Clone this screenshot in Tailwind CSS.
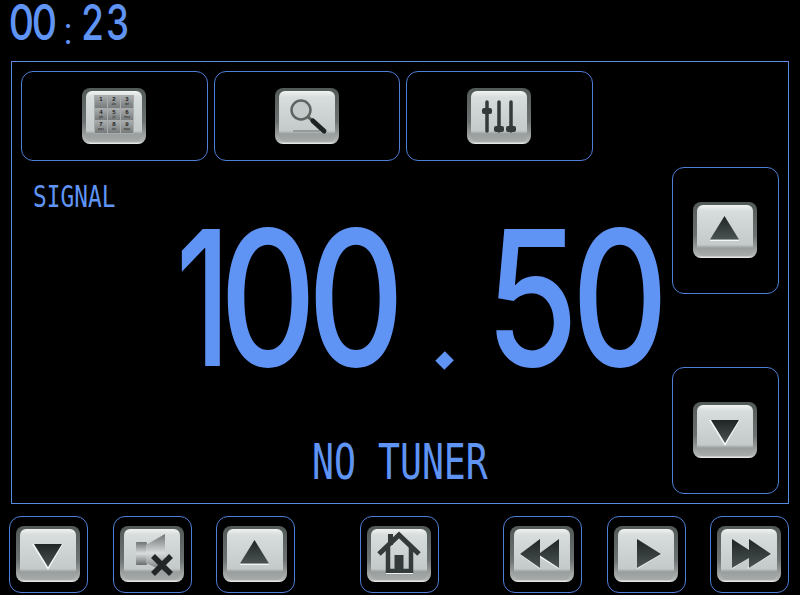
<!DOCTYPE html>
<html lang="en">
<head>
  <meta charset="UTF-8" />
  <title>Radio</title>
  <script src="https://cdn.jsdelivr.net/npm/@tailwindcss/browser@4"></script>
</head>
<body class="bg-black w-[800px] h-[595px] overflow-hidden text-[#5f94f5] [font-family:Inter,sans-serif]">
  <svg class="absolute w-0 h-0">
    <defs>
      <linearGradient id="dark" x1="0" y1="0" x2="0" y2="1"><stop offset="0" stop-color="#1f2525"/><stop offset="1" stop-color="#4b5352"/></linearGradient>
      <linearGradient id="cone" x1="0" y1="0" x2="0" y2="1"><stop offset="0" stop-color="#6f7373"/><stop offset="0.5" stop-color="#d9dcdc"/><stop offset="1" stop-color="#6a6e6e"/></linearGradient>
    </defs>
  </svg>

  <!-- Clock -->
  <div class="flex h-[61px] pl-[10px] text-[49px] leading-[46px] font-medium">
    <span class="flex w-[23px] justify-center scale-x-[0.8]">0</span>
    <span class="flex w-[23px] justify-center scale-x-[0.8]">0</span>
    <span class="flex w-[24px] justify-center font-light text-[38px] translate-y-[7px]">:</span>
    <span class="flex w-[25px] justify-center scale-x-[0.75]">2</span>
    <span class="flex w-[25px] justify-center scale-x-[0.75]">3</span>
  </div>

  <!-- Main panel -->
  <div class="ml-[11px] w-[778px] h-[443px] border border-[#5a8ae0] flex pl-[9px] pt-[9px]">
    <div class="w-[651px]">
      <div class="flex gap-[6px]">
        <div class="w-[187px] h-[90px] pr-[1px] border border-[#4f7fd8] rounded-xl flex items-center justify-center">
          <div class="relative w-16 h-14 rounded-lg bg-[linear-gradient(180deg,#525a58,#6c7271_60%,#b4b8b7_96%,#f4f6f6)] pt-[3px] px-[4px] pb-[2px]">
            <div class="h-full rounded-md bg-[linear-gradient(180deg,#f0f3f2,#d7dddc_12%,#c3cac9_78%,#989e9d_84%,#a8acab)]"></div>
            <div class="absolute left-[12px] top-[7px] w-[40px] h-[39px] grid grid-cols-3 gap-[1px] p-[1px] bg-[#a8acac] text-[#1d2020] [font-family:'Liberation_Sans',sans-serif]">
              <div class="flex flex-col items-center bg-[linear-gradient(180deg,#a9acac,#777b7b)] text-[6px] leading-[7px] font-bold">1</div>
              <div class="flex flex-col items-center bg-[linear-gradient(180deg,#a9acac,#777b7b)] text-[6px] leading-[7px] font-bold">2<span class="text-[3px] leading-[3px] font-normal">abc</span></div>
              <div class="flex flex-col items-center bg-[linear-gradient(180deg,#a9acac,#777b7b)] text-[6px] leading-[7px] font-bold">3<span class="text-[3px] leading-[3px] font-normal">def</span></div>
              <div class="flex flex-col items-center bg-[linear-gradient(180deg,#a9acac,#777b7b)] text-[6px] leading-[7px] font-bold">4<span class="text-[3px] leading-[3px] font-normal">ghi</span></div>
              <div class="flex flex-col items-center bg-[linear-gradient(180deg,#a9acac,#777b7b)] text-[6px] leading-[7px] font-bold">5<span class="text-[3px] leading-[3px] font-normal">jkl</span></div>
              <div class="flex flex-col items-center bg-[linear-gradient(180deg,#a9acac,#777b7b)] text-[6px] leading-[7px] font-bold">6<span class="text-[3px] leading-[3px] font-normal">mno</span></div>
              <div class="flex flex-col items-center bg-[linear-gradient(180deg,#a9acac,#777b7b)] text-[6px] leading-[7px] font-bold">7<span class="text-[3px] leading-[3px] font-normal">pqrs</span></div>
              <div class="flex flex-col items-center bg-[linear-gradient(180deg,#a9acac,#777b7b)] text-[6px] leading-[7px] font-bold">8<span class="text-[3px] leading-[3px] font-normal">tuv</span></div>
              <div class="flex flex-col items-center bg-[linear-gradient(180deg,#a9acac,#777b7b)] text-[6px] leading-[7px] font-bold">9<span class="text-[3px] leading-[3px] font-normal">wxyz</span></div>
            </div>
          </div>
        </div>
        <div class="w-[186px] h-[90px] border border-[#4f7fd8] rounded-xl flex items-center justify-center">
          <div class="relative w-16 h-14 rounded-lg bg-[linear-gradient(180deg,#525a58,#6c7271_60%,#b4b8b7_96%,#f4f6f6)] pt-[3px] px-[4px] pb-[2px]">
            <div class="h-full rounded-md bg-[linear-gradient(180deg,#f0f3f2,#d7dddc_12%,#c3cac9_78%,#989e9d_84%,#a8acab)]"></div>
            <svg class="absolute inset-0" viewBox="0 0 64 56">
              <path d="M18 43H45" stroke="#959b9a" stroke-width="2"/>
              <circle cx="26" cy="22" r="9.5" fill="#c4cac9" stroke="#5f6463" stroke-width="2.5"/>
              <path d="M33 29L38 33" stroke="#5f6463" stroke-width="3"/>
              <path d="M38 33L49 43" stroke="#1e2222" stroke-width="5" stroke-linecap="round"/>
            </svg>
          </div>
        </div>
        <div class="w-[187px] h-[90px] pr-[1px] border border-[#4f7fd8] rounded-xl flex items-center justify-center">
          <div class="relative w-16 h-14 rounded-lg bg-[linear-gradient(180deg,#525a58,#6c7271_60%,#b4b8b7_96%,#f4f6f6)] pt-[3px] px-[4px] pb-[2px]">
            <div class="h-full rounded-md bg-[linear-gradient(180deg,#f0f3f2,#d7dddc_12%,#c3cac9_78%,#989e9d_84%,#a8acab)]"></div>
            <svg class="absolute inset-0" viewBox="0 0 64 56" fill="#343939">
              <path d="M20 14V43M32 14V43M44 14V43" stroke="#343939" stroke-width="3.5" stroke-linecap="round"/>
              <rect x="15" y="20" width="10" height="6" rx="2"/>
              <rect x="27" y="38" width="10" height="6" rx="2"/>
              <rect x="39" y="38" width="10" height="6" rx="2"/>
            </svg>
          </div>
        </div>
      </div>

      <div class="mt-[25px] ml-[12px] h-[22px] text-[30px] leading-[22px] origin-left scale-x-[0.76] [font-family:'DejaVu_Sans_Mono',monospace]">SIGNAL</div>

      <!-- Frequency -->
      <div class="flex mt-[17px] ml-[179px] h-[145px] text-[188px] leading-[145px] font-medium">
        <span class="flex w-[24px] justify-center scale-x-[0.7] translate-x-[-9px]">1</span>
        <span class="flex w-[88px] justify-center scale-x-[0.8]">0</span>
        <span class="flex w-[88px] justify-center scale-x-[0.8]">0</span>
        <span class="flex w-[88px] justify-center">
          <span class="flex w-[16px] h-[16px] mt-[103px] justify-center text-[90px] leading-[16px] font-bold rotate-45 origin-[8px_33px] [font-family:'Liberation_Sans',sans-serif]">.</span>
        </span>
        <span class="flex w-[88px] justify-center scale-x-[0.8]">5</span>
        <span class="flex w-[88px] justify-center scale-x-[0.8]">0</span>
      </div>

      <div class="mt-[75px] ml-[291px] h-[36px] text-[49px] leading-[36px] whitespace-pre origin-left scale-x-[0.745] [font-family:'DejaVu_Sans_Mono',monospace]">NO TUNER</div>
    </div>

    <div class="pt-[96px] flex flex-col gap-[73px]">
      <div class="w-[107px] h-[127px] pr-[1px] pb-[1px] border border-[#4f7fd8] rounded-xl flex items-center justify-center">
        <div class="relative w-16 h-14 rounded-lg bg-[linear-gradient(180deg,#525a58,#6c7271_60%,#b4b8b7_96%,#f4f6f6)] pt-[3px] px-[4px] pb-[2px]">
          <div class="h-full rounded-md bg-[linear-gradient(180deg,#f0f3f2,#d7dddc_12%,#c3cac9_78%,#989e9d_84%,#a8acab)]"></div>
          <svg class="absolute inset-0" viewBox="0 0 64 56">
            <path d="M17 37.5H46V39H17Z" fill="#f4f6f6"/>
            <path d="M31.5 14L46 37.5H17Z" fill="url(#dark)"/>
          </svg>
        </div>
      </div>
      <div class="w-[107px] h-[127px] pr-[1px] pb-[1px] border border-[#4f7fd8] rounded-xl flex items-center justify-center">
        <div class="relative w-16 h-14 rounded-lg bg-[linear-gradient(180deg,#525a58,#6c7271_60%,#b4b8b7_96%,#f4f6f6)] pt-[3px] px-[4px] pb-[2px]">
          <div class="h-full rounded-md bg-[linear-gradient(180deg,#f0f3f2,#d7dddc_12%,#c3cac9_78%,#989e9d_84%,#a8acab)]"></div>
          <svg class="absolute inset-0" viewBox="0 0 64 56">
            <path d="M16 18L32 44L47 18H45L32 40L18 18Z" fill="#f4f6f6"/>
            <path d="M18 18H46L32 41Z" fill="url(#dark)"/>
          </svg>
        </div>
      </div>
    </div>
  </div>

  <!-- Bottom buttons -->
  <div class="flex mt-[12px] ml-[9px]">
    <div class="w-[79px] h-[77px] pr-[1px] pb-[1px] border border-[#4f7fd8] rounded-xl flex items-center justify-center">
      <div class="relative w-16 h-14 rounded-lg bg-[linear-gradient(180deg,#525a58,#6c7271_60%,#b4b8b7_96%,#f4f6f6)] pt-[3px] px-[4px] pb-[2px]">
        <div class="h-full rounded-md bg-[linear-gradient(180deg,#f0f3f2,#d7dddc_12%,#c3cac9_78%,#989e9d_84%,#a8acab)]"></div>
        <svg class="absolute inset-0" viewBox="0 0 64 56">
          <path d="M16 18L32 44L47 18H45L32 40L18 18Z" fill="#f4f6f6"/>
          <path d="M18 18H46L32 41Z" fill="url(#dark)"/>
        </svg>
      </div>
    </div>
    <div class="ml-[25px] w-[79px] h-[77px] pr-[1px] pb-[1px] border border-[#4f7fd8] rounded-xl flex items-center justify-center">
      <div class="relative w-16 h-14 rounded-lg bg-[linear-gradient(180deg,#525a58,#6c7271_60%,#b4b8b7_96%,#f4f6f6)] pt-[3px] px-[4px] pb-[2px]">
        <div class="h-full rounded-md bg-[linear-gradient(180deg,#f0f3f2,#d7dddc_12%,#c3cac9_78%,#989e9d_84%,#a8acab)]"></div>
        <svg class="absolute inset-0" viewBox="0 0 64 56">
          <rect x="16" y="16" width="11" height="23" rx="1" fill="url(#cone)"/>
          <path d="M26 19L45 8V46L26 37Z" fill="url(#cone)"/>
          <path d="M33 30L51 48M51 30L33 48" stroke="#222626" stroke-width="5.500"/>
        </svg>
      </div>
    </div>
    <div class="ml-[24px] w-[79px] h-[77px] pr-[1px] pb-[1px] border border-[#4f7fd8] rounded-xl flex items-center justify-center">
      <div class="relative w-16 h-14 rounded-lg bg-[linear-gradient(180deg,#525a58,#6c7271_60%,#b4b8b7_96%,#f4f6f6)] pt-[3px] px-[4px] pb-[2px]">
        <div class="h-full rounded-md bg-[linear-gradient(180deg,#f0f3f2,#d7dddc_12%,#c3cac9_78%,#989e9d_84%,#a8acab)]"></div>
        <svg class="absolute inset-0" viewBox="0 0 64 56">
          <path d="M17 37.5H46V39H17Z" fill="#f4f6f6"/>
          <path d="M31.5 14L46 37.5H17Z" fill="url(#dark)"/>
        </svg>
      </div>
    </div>
    <div class="ml-[65px] w-[79px] h-[77px] pr-[1px] pb-[1px] border border-[#4f7fd8] rounded-xl flex items-center justify-center">
      <div class="relative w-16 h-14 rounded-lg bg-[linear-gradient(180deg,#525a58,#6c7271_60%,#b4b8b7_96%,#f4f6f6)] pt-[3px] px-[4px] pb-[2px]">
        <div class="h-full rounded-md bg-[linear-gradient(180deg,#f0f3f2,#d7dddc_12%,#c3cac9_78%,#989e9d_84%,#a8acab)]"></div>
        <svg class="absolute inset-0" viewBox="0 0 64 56" fill="#343a3a">
          <path d="M12 28L32 9L52 28" fill="none" stroke="#343a3a" stroke-width="5"/>
          <rect x="21" y="8" width="5" height="11"/>
          <path d="M21 21V45H44V21" fill="none" stroke="#343a3a" stroke-width="4.500"/>
          <rect x="27.5" y="29" width="9" height="17"/>
          <path d="M19 47.500H46" stroke="#eef1f0" stroke-width="1"/>
        </svg>
      </div>
    </div>
    <div class="ml-[64px] w-[79px] h-[77px] pr-[1px] pb-[1px] border border-[#4f7fd8] rounded-xl flex items-center justify-center">
      <div class="relative w-16 h-14 rounded-lg bg-[linear-gradient(180deg,#525a58,#6c7271_60%,#b4b8b7_96%,#f4f6f6)] pt-[3px] px-[4px] pb-[2px]">
        <div class="h-full rounded-md bg-[linear-gradient(180deg,#f0f3f2,#d7dddc_12%,#c3cac9_78%,#989e9d_84%,#a8acab)]"></div>
        <svg class="absolute inset-0" viewBox="0 0 64 56">
          <path d="M9 28L30 43V41L12 28ZM26 29L49 43V41L29 29Z" fill="#f4f6f6"/>
          <path d="M10 28L30 13V27L49 13V42L30 29.500V42Z" fill="url(#dark)"/>
        </svg>
      </div>
    </div>
    <div class="ml-[25px] w-[79px] h-[77px] pr-[1px] pb-[1px] border border-[#4f7fd8] rounded-xl flex items-center justify-center">
      <div class="relative w-16 h-14 rounded-lg bg-[linear-gradient(180deg,#525a58,#6c7271_60%,#b4b8b7_96%,#f4f6f6)] pt-[3px] px-[4px] pb-[2px]">
        <div class="h-full rounded-md bg-[linear-gradient(180deg,#f0f3f2,#d7dddc_12%,#c3cac9_78%,#989e9d_84%,#a8acab)]"></div>
        <svg class="absolute inset-0" viewBox="0 0 64 56">
          <path d="M23 43L48 28H45L23 41Z" fill="#f4f6f6"/>
          <path d="M23 13L47 28L23 42Z" fill="url(#dark)"/>
        </svg>
      </div>
    </div>
    <div class="ml-[24px] w-[79px] h-[77px] pr-[1px] pb-[1px] border border-[#4f7fd8] rounded-xl flex items-center justify-center">
      <div class="relative w-16 h-14 rounded-lg bg-[linear-gradient(180deg,#525a58,#6c7271_60%,#b4b8b7_96%,#f4f6f6)] pt-[3px] px-[4px] pb-[2px]">
        <div class="h-full rounded-md bg-[linear-gradient(180deg,#f0f3f2,#d7dddc_12%,#c3cac9_78%,#989e9d_84%,#a8acab)]"></div>
        <svg class="absolute inset-0" viewBox="0 0 64 56">
          <path d="M15 43L35 30V28L15 41ZM31 43L55 28H52L31 41Z" fill="#f4f6f6"/>
          <path d="M15 13L32 24V13L54 28L32 42V32L15 42Z" fill="url(#dark)"/>
        </svg>
      </div>
    </div>
  </div>
</body>
</html>
